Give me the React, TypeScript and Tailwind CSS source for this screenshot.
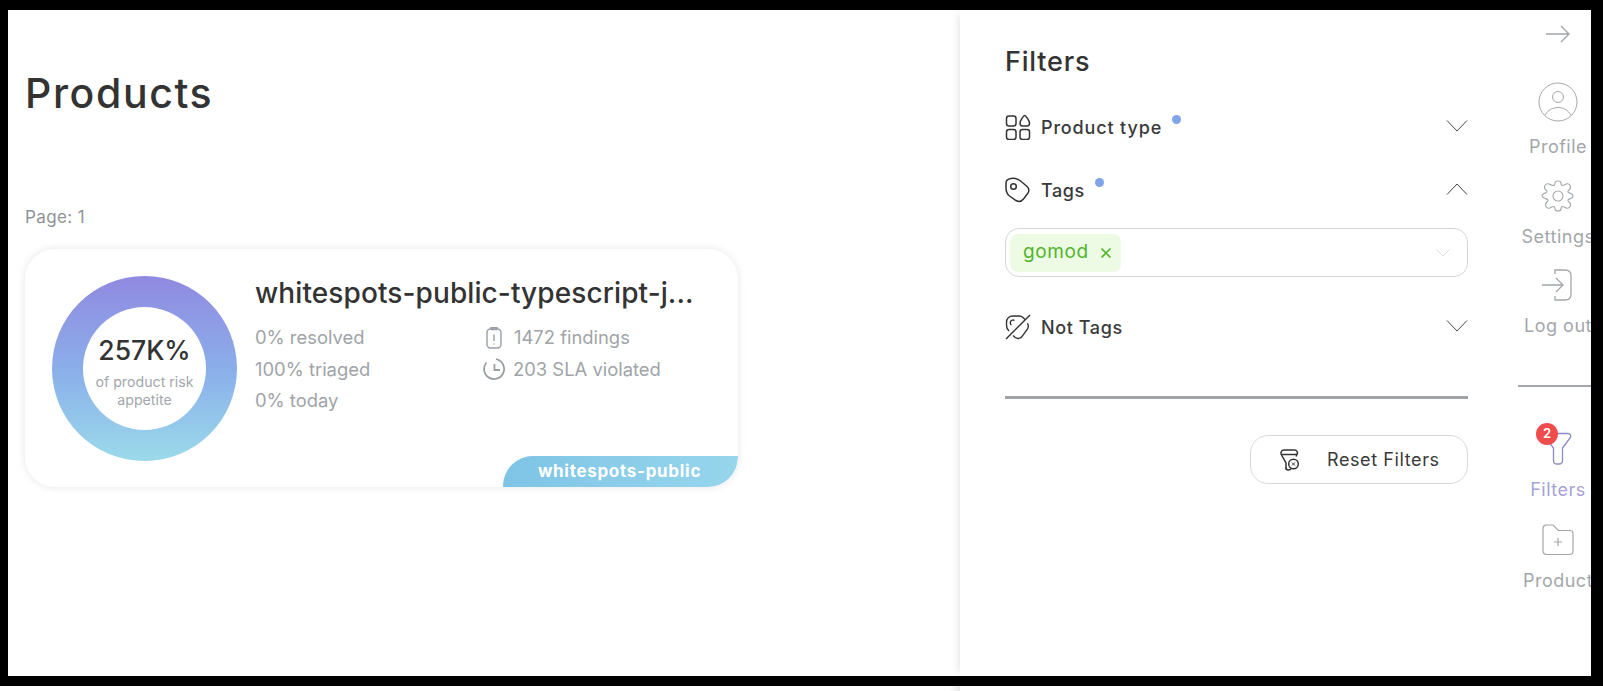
import React from "react";

const Chevron = ({ up = false }: { up?: boolean }) => (
  <svg width="22" height="12" viewBox="0 0 22 12" fill="none" stroke="#444" strokeWidth="1">
    <path d={up ? "M1 11.500 11 1l10 10.500" : "M1 .5 11 11 21 .5"} />
  </svg>
);

const FilterRow = ({ icon, label, dot, up, track = "tracking-[0.6px]" }: { icon: React.ReactNode; label: string; dot?: boolean; up?: boolean; track?: string }) => (
  <div className="flex h-[26px] items-center">
    <div className="w-[26px] h-[26px] shrink-0">{icon}</div>
    <span className={`ml-[10px] text-[18px] font-medium text-[#3a3a3a] ${track}`}>{label}</span>
    {dot && <span className="ml-[10px] mb-[16px] h-[9px] w-[9px] rounded-full bg-[#7ea5ea]" />}
    <div className="ml-auto mb-[2px]"><Chevron up={up} /></div>
  </div>
);

const NavItem = ({ icon, label, color = "text-[#a3a7ab]", cls = "" }: { icon: React.ReactNode; label: string; color?: string; cls?: string }) => (
  <div className={`flex flex-col items-center ${cls}`}>
    <div className="relative flex items-center justify-center">{icon}</div>
    <span className={`mt-[14px] text-[18px] leading-[22px] whitespace-nowrap tracking-[0.5px] ${color}`}>{label}</span>
  </div>
);

export default function App() {
  return (
    <div className="h-[691px] w-[1603px] bg-white overflow-hidden font-['Inter','Liberation_Sans',sans-serif]">
      <div className="h-[686px] w-[1603px] border-t-[10px] border-b-[10px] border-l-[8px] border-r-[12px] border-black flex overflow-hidden bg-white">
        {/* Main */}
        <div className="w-[952px] shrink-0 pl-[17px]">
          <h1 className="mt-[57px] text-[41px] leading-[52px] font-medium text-[#333] tracking-[1.600px]">Products</h1>
          <div className="mt-[86px] text-[17px] leading-[24px] text-[#8f9397] tracking-[0.4px]">Page: 1</div>
          <div className="relative mt-[20px] h-[238px] w-[713px] rounded-[30px] bg-white shadow-[0_0_8px_rgba(0,0,0,0.1)] overflow-hidden flex pl-[27px] pt-[27px]">
            <div className="h-[185px] w-[185px] shrink-0 rounded-full bg-gradient-to-b from-[#9089e0] via-[#8aaeea] to-[#9bdaea] flex items-center justify-center">
              <div className="h-[123px] w-[123px] rounded-full bg-white flex flex-col items-center pt-[27px]">
                <div className="text-[26.500px] leading-[32px] font-medium text-[#333]">257K%</div>
                <div className="mt-[7px] text-center text-[14.200px] leading-[18px] text-[#a3a7ab]">of product risk<br />appetite</div>
              </div>
            </div>
            <div className="ml-[18px] flex-1">
              <div className="-mt-[1px] text-[28px] leading-[36px] font-medium text-[#333] tracking-[0.1px] whitespace-nowrap">whitespots-public-typescript-j...</div>
              <div className="mt-[11px] grid grid-cols-[229px_1fr] grid-rows-[32px_31px_31px] text-[18.400px] text-[#a0a4a8] items-center">
                <span>0% resolved</span>
                <span className="flex items-center">
                  <svg width="20" height="24" viewBox="0 0 20 24" fill="none" stroke="#9a9ea3" strokeWidth="1.400" className="mr-[10px]">
                    <rect x="3" y="3" width="14" height="19" rx="3.500" /><path d="M7 3V1.800h6V3M7 3.500h6M10 8.500v6.500M10 17.500v1" />
                  </svg>
                  1472 findings
                </span>
                <span>100% triaged</span>
                <span className="flex items-center">
                  <svg width="24" height="24" viewBox="0 0 24 24" fill="none" stroke="#9a9ea3" strokeWidth="1.800" className="mr-[7px] -ml-[2px]">
                    <path d="M14 2.200A10 10 0 1 1 4.500 5.500M12.500 7v6h5.500" />
                  </svg>
                  203 SLA violated
                </span>
                <span>0% today</span>
              </div>
            </div>
            <div className="absolute bottom-0 right-0 h-[31px] w-[235px] rounded-tl-[30px] rounded-br-[30px] bg-gradient-to-r from-[#7fc4e6] to-[#97d6ec] flex items-center justify-center pr-[2px] text-[17px] font-bold text-white tracking-[0.7px]">whitespots-public</div>
          </div>
        </div>

        {/* Filter panel */}
        <div className="w-[558px] shrink-0 pl-[45px] pr-[50px] shadow-[-6px_0_8px_-4px_rgba(0,0,0,0.1)]">
          <div className="mt-[34px] text-[27px] leading-[36px] font-medium text-[#333] tracking-[0.8px]">Filters</div>
          <div className="mt-[34px]">
            <FilterRow
              dot
              track="tracking-[0.85px]"
              label="Product type"
              icon={
                <svg width="26" height="26" viewBox="0 0 26 26" fill="none" stroke="#333" strokeWidth="1.500">
                  <rect x="1.500" y="2" width="9.500" height="10" rx="2.500" /><rect x="1.500" y="15.500" width="9.500" height="10" rx="2.500" /><rect x="15" y="15.500" width="9.500" height="10" rx="2.500" />
                  <path d="M19.700 1.500c1 0 4.800 5 4.800 7.500 0 1.500-1 3-2.500 3h-4.500C16 12 15 10.500 15 9c0-2.500 3.700-7.500 4.700-7.500Z" />
                </svg>
              }
            />
          </div>
          <div className="mt-[37px]">
            <FilterRow
              dot
              up
              label="Tags"
              icon={
                <svg width="26" height="26" viewBox="0 0 26 26" fill="none" stroke="#333" strokeWidth="1.500">
                  <path d="M6 1.500C9 1 12 1.500 15 3.500L21.500 9C24.500 11.500 24.500 13.500 23 16L18.500 22C16 25 13.500 25 11 23.500L4.500 19C2 17 1 15 1 11V6C1 3 3 2 6 1.500Z" />
                  <circle cx="8.500" cy="9.500" r="2.800" />
                </svg>
              }
            />
          </div>
          <div className="mt-[25px] flex h-[49px] items-center rounded-[14px] border border-[#d6d6d6] pl-[4px] pr-[17px]">
            <div className="flex h-[38px] w-[111px] items-center rounded-[8px] bg-[#edfbe5] pl-[13px] text-[19px] text-[#52b52a] tracking-[0.6px]">
              gomod
              <svg width="12" height="12" viewBox="0 0 12 12" stroke="#52b52a" strokeWidth="1.700" className="ml-[11px] mt-[1px]"><path d="m1.500 1.500 9 9M10.500 1.500l-9 9" /></svg>
            </div>
            <svg width="14" height="8" viewBox="0 0 14 8" fill="none" stroke="#dcdcdc" strokeWidth="1" className="ml-auto"><path d="m.5.500 6.500 6.500 6.500-6.500" /></svg>
          </div>
          <div className="mt-[37px]">
            <FilterRow
              label="Not Tags"
              icon={
                <svg width="26" height="26" viewBox="0 0 26 26" fill="none" stroke="#333" strokeWidth="1.400">
                  <path d="M1 25 25 1" />
                  <path d="M20 5.500 18 3.500C17 2.500 15.500 2 14 2H8C4 2 1.500 4.500 1.500 8.500V11c0 2.500.8 4.500 2.500 6M8 21.500l2 1.800c2.500 2 5.500 1.500 7.500-1.500l5-7c1-1.500 1-3.500 0-5.500" />
                  <path d="M6.500 11a2.500 2.500 0 0 1 3-4.500" />
                </svg>
              }
            />
          </div>
          <div className="mt-[56px] h-[3px] bg-[#9fa4a7]" />
          <div className="mt-[36px] flex justify-end">
            <div className="flex h-[49px] w-[218px] items-center rounded-[18px] border border-[#d9d9d9] pl-[29px] text-[18px] text-[#3a3a3a] tracking-[0.6px]">
              <svg width="20" height="24" viewBox="0 0 20 24" fill="none" stroke="#333" strokeWidth="1.500">
                <path d="M6 21.500V15L1.500 7C.5 5 1 2 4 2h10.500c2.500 0 3.500 2.500 2.500 4.500l-1 2" />
                <path d="M2 6.500h15" />
                <path d="M6 19.500c0 3 4 3.500 5 1" />
                <circle cx="13.500" cy="16" r="4.800" /><path d="m12 14.500 3 3M15 14.500l-3 3" strokeWidth="1" />
              </svg>
              <span className="ml-[27px]">Reset Filters</span>
            </div>
          </div>
        </div>

        {/* Rail */}
        <div className="w-[80px] shrink-0 flex flex-col">
          <div className="mt-[15px] flex justify-center">
            <svg width="26" height="18" viewBox="0 0 26 18" fill="none" stroke="#a3a7ab" strokeWidth="1.400"><path d="M1 9h23M16 1l8 8-8 8" /></svg>
          </div>
          <NavItem
            cls="mt-[39px]"
            label="Profile"
            icon={
              <svg width="40" height="40" viewBox="0 0 40 40" fill="none" stroke="#a3a7ab" strokeWidth="1">
                <circle cx="20" cy="20" r="19" /><circle cx="20" cy="15" r="5.500" /><path d="M7 33c3-5 8-7.500 13-7.500S30 28 33 33" />
              </svg>
            }
          />
          <NavItem
            cls="mt-[22px]"
            label="Settings"
            icon={
              <svg width="34" height="32" viewBox="0 0 34 32" fill="none" stroke="#a3a7ab" strokeWidth="1.100">
                <circle cx="17" cy="16" r="5" />
                <path d="M12.500 5.500c1 0 1.500-1.500 1.500-2.500s1-2 3-2 3 1 3 2 .5 2.500 1.500 2.500 2.500-1 3.500-1.500c1.500-.5 3-.3 4 1.500s.5 3-.5 4-2 1.500-1.500 2.500 2 1 3 1.500c1 .5 2 1.500 2 2.500s-1 2-2 2.500-2.500.5-3 1.500.5 1.500 1.500 2.500 1.500 2.200.5 4-2.500 2-4 1.500c-1-.5-2.500-1.500-3.500-1.500s-1.500 1.500-1.500 2.500-1 2-3 2-3-1-3-2-.5-2.500-1.500-2.500-2.500 1-3.500 1.500c-1.500.5-3 .3-4-1.500s-.5-3 .5-4 2-1.500 1.500-2.500-2-1-3-1.500S1 17 1 16s1-2 2-2.500 2.500-.5 3-1.500-.5-1.500-1.500-2.500S3 7.300 4 5.500s2.500-2 4-1.500c1 .5 3.500 1.500 4.500 1.500Z" />
              </svg>
            }
          />
          <NavItem
            cls="mt-[21px]"
            label="Log out"
            icon={
              <svg width="34" height="32" viewBox="0 0 34 32" fill="none" stroke="#a3a7ab" strokeWidth="1.300">
                <path d="M14 5V1h10c4 0 6 2 6 6v18c0 4-2 6-6 6H14v-4M1 16h21M15 9l7 7-7 7" />
              </svg>
            }
          />
          <div className="mt-[48px] h-[2px] bg-[#a3a7ab]" />
          <NavItem
            cls="mt-[45px]"
            label="Filters"
            color="text-[#a5a3d6]"
            icon={
              <>
                <svg width="28" height="33" viewBox="0 0 28 33" fill="none" stroke="#8c8ac8" strokeWidth="1.300">
                  <path d="M4 1.500h20c2.500 0 3.500 2.500 2 4.500l-7.500 10v12.500c0 2-1.500 3.500-3.500 3.500h-2c-2 0-3.500-1.500-3.500-3.500V16L2 6C.5 4 1.500 1.500 4 1.500Z" />
                </svg>
                <span className="absolute -left-[8px] -top-[9px] flex h-[22px] w-[22px] items-center justify-center rounded-full bg-[#ef4d4d] text-[13px] font-semibold text-white">2</span>
              </>
            }
          />
          <NavItem
            cls="mt-[23px]"
            label="Product"
            icon={
              <svg width="32" height="32" viewBox="0 0 32 32" fill="none" stroke="#a3a7ab" strokeWidth="1.200">
                <path d="M1 4.500C1 2.500 2.500 1 4.500 1H11l5.500 5.500H28c2 0 3 1.500 3 3V27c0 2-1.500 3.500-3.500 3.500h-23C2.500 30.500 1 29 1 27V4.500ZM16 14v8M12 18h8" />
              </svg>
            }
          />
        </div>
      </div>
      <div className="ml-[950px] h-[5px] w-[10px] bg-gradient-to-r from-white to-[#e8e8e8]" />
    </div>
  );
}
